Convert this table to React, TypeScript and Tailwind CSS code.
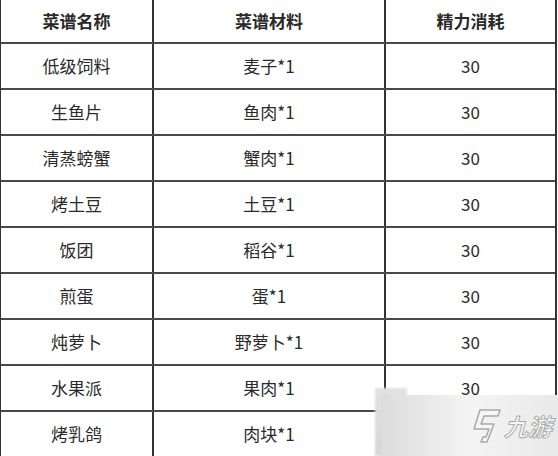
import React from 'react';

const rows: [string, string, string][] = [
  ['低级饲料', '麦子*1', '30'],
  ['生鱼片', '鱼肉*1', '30'],
  ['清蒸螃蟹', '蟹肉*1', '30'],
  ['烤土豆', '土豆*1', '30'],
  ['饭团', '稻谷*1', '30'],
  ['煎蛋', '蛋*1', '30'],
  ['炖萝卜', '野萝卜*1', '30'],
  ['水果派', '果肉*1', '30'],
  ['烤乳鸽', '肉块*1', '30'],
];

const font = { fontFamily: '"Noto Sans CJK SC", "Liberation Sans", sans-serif' };

const Watermark: React.FC = () => (
  <div className="absolute right-0 bottom-0 w-[183px] h-[68px]">
    <div className="absolute left-0 top-0 w-[32px] h-full bg-gradient-to-b from-[#e2e2e2] to-[#d6d6d6] blur-[1px]" />
    <div className="absolute left-[6px] top-[7px] right-0 bottom-0 bg-gradient-to-r from-[#dcdcdc] via-[#f4f4f4] to-[#e9e9e9] flex items-center justify-end pr-[6px] gap-[2px]">
      <svg width="32" height="36" viewBox="0 0 32 36" fill="#f7f7f7" stroke="#a8a8a8" strokeWidth="1.5" strokeLinejoin="round">
        <path d="M10 2 L30 2 L28 8 L14 8 L11 16 L24 16 L17 34 L11 34 L13 29 L16 29 L19 21 L4 21 Z" />
      </svg>
      <span
        className="text-[24px] italic font-bold leading-none text-[#f7f7f7]"
        style={{ ...font, WebkitTextStroke: '0.9px #a8a8a8' }}
      >
        九游
      </span>
    </div>
  </div>
);

export default function App() {
  return (
    <div className="relative w-[558px] h-[456px] overflow-hidden bg-white text-[#2a2a2a]" style={font}>
      <div className="w-[557px] border-l border-r-2 border-[#333]">
        <div className="grid grid-cols-[153px_232px_1fr] h-[44px] border-b-2 border-[#4a4a4a] font-bold text-[17px]">
          <div className="flex items-center justify-center border-r-2 border-[#333]">菜谱名称</div>
          <div className="flex items-center justify-center border-r-2 border-[#333]">菜谱材料</div>
          <div className="flex items-center justify-center">精力消耗</div>
        </div>
        {rows.map(([name, mat, cost]) => (
          <div key={name} className="grid grid-cols-[153px_232px_1fr] h-[46px] border-b-2 border-[#4a4a4a] text-[17px]">
            <div className="flex items-center justify-center border-r-2 border-[#333]">{name}</div>
            <div className="flex items-center justify-center border-r-2 border-[#333]">{mat}</div>
            <div className="flex items-center justify-center">{cost}</div>
          </div>
        ))}
      </div>
      <Watermark />
    </div>
  );
}
